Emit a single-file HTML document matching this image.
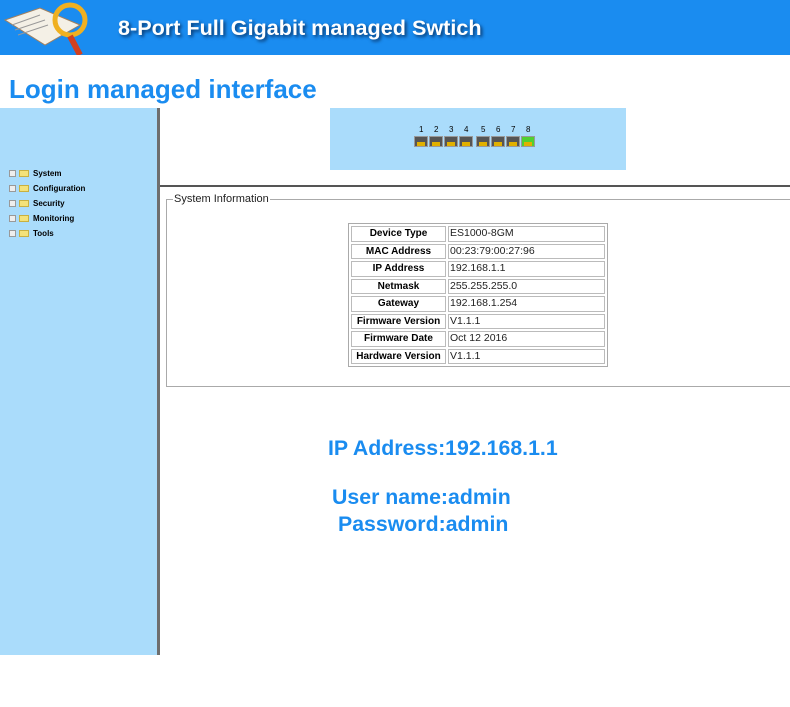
<!DOCTYPE html>
<html><head><meta charset="utf-8"><style>
*{margin:0;padding:0;box-sizing:border-box}
body{width:790px;height:707px;background:#fff;position:relative;overflow:hidden;font-family:"Liberation Sans",sans-serif}
.a{position:absolute}
#hdr{left:0;top:0;width:790px;height:55px;background:#1a8cf0}
#hdr .t{left:118px;top:15px;color:#fff;font-weight:bold;font-size:21.6px;text-shadow:2px 2px 3px #0a3a70}
#title{left:9px;top:74px;color:#1a8cf0;font-weight:bold;font-size:26px}
#side{left:0;top:108px;width:157px;height:547px;background:#aadcfb}
#vl{left:157px;top:108px;width:3px;height:547px;background:#6e6e6e}
#hl{left:160px;top:185px;width:630px;height:2px;background:#555}
#ports{left:330px;top:108px;width:296px;height:62px;background:#aadcfb}
.m{font-size:8px;font-weight:bold;color:#000;left:9px;height:15px;line-height:15px}
.m i{display:inline-block;width:7px;height:7px;border:1px solid #999;background:#eee;margin-right:3px;vertical-align:-1px}
.m b{display:inline-block;width:10px;height:7px;background:#f3e27a;border:1px solid #c8b040;margin-right:4px;vertical-align:-1px}
fieldset{position:absolute;left:166px;top:193px;width:624px;height:194px;border:1px solid #aaa;border-right:none}
legend{font-size:11px;color:#222;margin-left:6px;padding:0 1px}
table{position:absolute;left:348px;top:223px;width:260px;border:1px solid #aaa;border-collapse:separate;border-spacing:2px}
td{border:1px solid #bbb;height:15.5px;padding:0 1px;font-family:"Liberation Sans",sans-serif;font-size:10.5px;white-space:nowrap;line-height:13px}
td.l{font-weight:bold;text-align:center;width:95px;font-size:10px}
td.v{color:#222}
.big{color:#1a8cf0;font-weight:bold;font-size:21.3px}
.p{width:14px;height:11px;background:#555;border:1px solid #999;top:136px}
.p::after{content:"";position:absolute;left:2px;top:5px;width:8px;height:4px;background:#e0b000}
.n{font-size:8px;top:125px}
</style></head><body>
<div id="hdr" class="a">
<svg class="a" style="left:0;top:0" width="110" height="55"><polygon points="5,20 40,8 80,25 45,45" fill="#f4f0e6" stroke="#a08060"/><line x1="12" y1="25" x2="40" y2="15" stroke="#999"/><line x1="15" y1="30" x2="45" y2="20" stroke="#999"/><line x1="18" y1="35" x2="48" y2="25" stroke="#999"/><circle cx="70" cy="20" r="15" fill="none" stroke="#f0b020" stroke-width="5"/><line x1="70" y1="36" x2="80" y2="55" stroke="#d04020" stroke-width="6"/></svg>
<div class="a t">8-Port Full Gigabit managed Swtich</div></div>
<div id="title" class="a">Login managed interface</div>
<div id="side" class="a"></div>
<div id="vl" class="a"></div>
<div id="hl" class="a"></div>
<div id="ports" class="a"></div>
<div class="a n" style="left:419px">1</div><div class="a n" style="left:434px">2</div><div class="a n" style="left:449px">3</div><div class="a n" style="left:464px">4</div><div class="a n" style="left:481px">5</div><div class="a n" style="left:496px">6</div><div class="a n" style="left:511px">7</div><div class="a n" style="left:526px">8</div>
<div class="a p" style="left:414px"></div><div class="a p" style="left:429px"></div><div class="a p" style="left:444px"></div><div class="a p" style="left:459px"></div><div class="a p" style="left:476px"></div><div class="a p" style="left:491px"></div><div class="a p" style="left:506px"></div><div class="a p" style="left:521px;background:#50d030"></div>
<div class="a m" style="top:166px"><i></i><b></b>System</div>
<div class="a m" style="top:181px"><i></i><b></b>Configuration</div>
<div class="a m" style="top:196px"><i></i><b></b>Security</div>
<div class="a m" style="top:211px"><i></i><b></b>Monitoring</div>
<div class="a m" style="top:226px"><i></i><b></b>Tools</div>
<fieldset><legend>System Information</legend></fieldset>
<table>
<tr><td class="l">Device Type</td><td class="v">ES1000-8GM</td></tr>
<tr><td class="l">MAC Address</td><td class="v">00:23:79:00:27:96</td></tr>
<tr><td class="l">IP Address</td><td class="v">192.168.1.1</td></tr>
<tr><td class="l">Netmask</td><td class="v">255.255.255.0</td></tr>
<tr><td class="l">Gateway</td><td class="v">192.168.1.254</td></tr>
<tr><td class="l">Firmware Version</td><td class="v">V1.1.1</td></tr>
<tr><td class="l">Firmware Date</td><td class="v">Oct 12 2016</td></tr>
<tr><td class="l">Hardware Version</td><td class="v">V1.1.1</td></tr>
</table>
<div class="a big" style="left:328px;top:436px">IP Address:192.168.1.1</div>
<div class="a big" style="left:332px;top:485px">User name:admin</div>
<div class="a big" style="left:338px;top:512px">Password:admin</div>
</body></html>
